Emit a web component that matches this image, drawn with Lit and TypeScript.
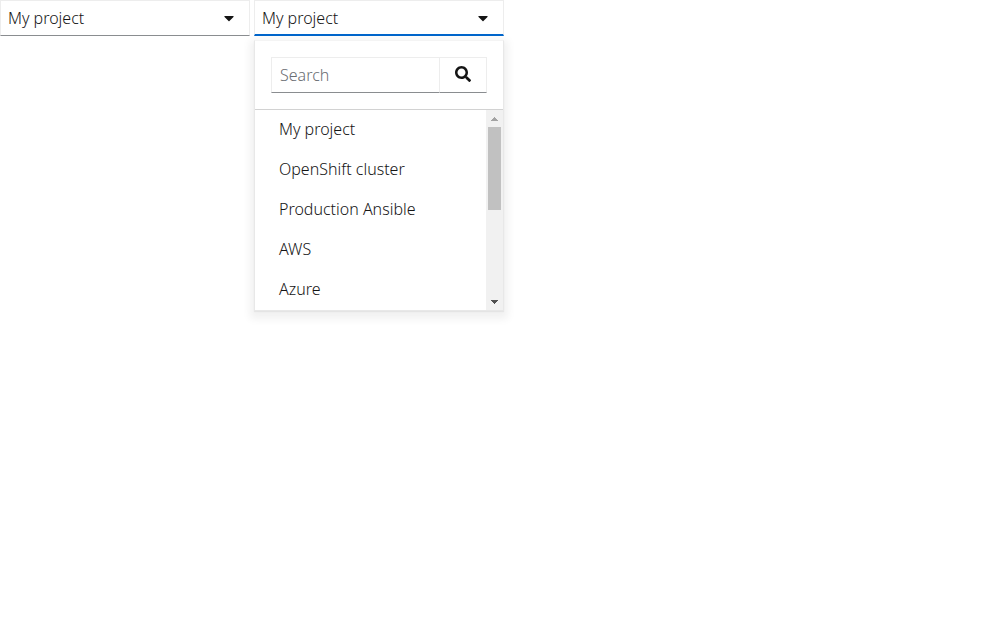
import { LitElement, html, css, nothing } from "lit";
import { customElement, property, state } from "lit/decorators.js";
import { classMap } from "lit/directives/class-map.js";

const PROJECTS = [
  "My project",
  "OpenShift cluster",
  "Production Ansible",
  "AWS",
  "Azure",
  "My project 2",
  "OpenShift cluster 2",
  "Production Ansible 2",
  "AWS 2",
  "Azure 2",
];

const VISIBLE_ROWS = 5;

const searchIcon = html`
  <svg class="icon" viewBox="0 0 512 512" width="16" height="16" aria-hidden="true">
    <path
      fill="currentColor"
      d="M505 442.7L405.3 343c-4.5-4.5-10.6-7-17-7H372c27.6-35.3 44-79.7 44-128C416 93.1 322.9 0 208 0S0 93.1 0 208s93.1 208 208 208c48.3 0 92.7-16.4 128-44v16.3c0 6.4 2.5 12.5 7 17l99.7 99.7c9.4 9.4 24.6 9.4 33.9 0l28.3-28.3c9.4-9.4 9.4-24.6.1-34zM208 336c-70.7 0-128-57.2-128-128 0-70.7 57.2-128 128-128 70.7 0 128 57.2 128 128 0 70.7-57.2 128-128 128z"
    />
  </svg>
`;

const caretIcon = html`
  <svg class="icon" viewBox="0 0 320 512" width="10" height="16" aria-hidden="true">
    <path
      fill="currentColor"
      d="M31.3 192h257.3c17.8 0 26.7 21.5 14.1 34.1L174.1 354.7c-7.8 7.8-20.5 7.8-28.3 0L17.2 226.1C4.6 213.5 13.4 192 31.3 192z"
    />
  </svg>
`;

const base = css`
  *,
  *::before,
  *::after {
    box-sizing: border-box;
  }
  button,
  input {
    margin: 0;
    border: 0;
    border-radius: 0;
    background: transparent;
    color: inherit;
    font: inherit;
  }
  button {
    cursor: pointer;
  }
  .icon {
    display: block;
    flex: none;
  }
`;

/** Windowed list: renders only the rows in view and draws its own scrollbar. */
@customElement("scroll-list")
export class ScrollList extends LitElement {
  @property({ attribute: false }) items: string[] = [];
  @state() private first = 0;

  static styles = [
    base,
    css`
      :host {
        display: flex;
        min-height: 200px;
      }
      .list {
        flex: 1;
        min-width: 0;
        margin: 0;
        padding: 0;
        list-style: none;
      }
      .item {
        display: block;
        width: 100%;
        padding: 7px 24px 9px;
        line-height: 24px;
        text-align: left;
      }
      .item:hover,
      .item:focus-visible {
        background: #f0f0f0;
        outline: 0;
      }
      .bar {
        flex: none;
        display: flex;
        flex-direction: column;
        width: 17px;
        background: #f1f1f1;
      }
      .arrow {
        display: flex;
        align-items: center;
        justify-content: center;
        height: 17px;
        padding: 0;
        color: #505050;
        cursor: default;
      }
      .arrow:disabled {
        color: #a3a3a3;
      }
      .track {
        flex: 1;
        display: flex;
        justify-content: center;
      }
    `,
  ];

  private moveBy(step: number) {
    const last = Math.max(0, this.items.length - VISIBLE_ROWS);
    this.first = Math.min(last, Math.max(0, this.first + step));
  }

  private onWheel(e: WheelEvent) {
    e.preventDefault();
    this.moveBy(Math.sign(e.deltaY));
  }

  willUpdate(changed: Map<string, unknown>) {
    if (changed.has("items")) this.moveBy(0);
  }

  render() {
    const total = Math.max(this.items.length, VISIBLE_ROWS);
    const size = (VISIBLE_ROWS / total) * 100;
    const start = (this.first / total) * 100;
    return html`
      <ul class="list" @wheel=${this.onWheel}>
        ${this.items
          .slice(this.first, this.first + VISIBLE_ROWS)
          .map((name) => html`<li><button class="item" type="button">${name}</button></li>`)}
      </ul>
      <div class="bar">
        <button
          class="arrow"
          type="button"
          aria-label="Scroll up"
          ?disabled=${this.first === 0}
          @click=${() => this.moveBy(-1)}
        >
          <svg class="icon" width="7" height="4" viewBox="0 0 7 4" shape-rendering="crispEdges">
            <path fill="currentColor" d="M3 0h1v1h1v1h1v1h1v1H0V3h1V2h1V1h1z" />
          </svg>
        </button>
        <div class="track">
          <svg class="icon" width="13" height="100%" aria-hidden="true">
            <rect fill="#c1c1c1" width="13" y="${start}%" height="${size}%" />
          </svg>
        </div>
        <button
          class="arrow"
          type="button"
          aria-label="Scroll down"
          ?disabled=${this.first + VISIBLE_ROWS >= total}
          @click=${() => this.moveBy(1)}
        >
          <svg class="icon" width="7" height="4" viewBox="0 0 7 4" shape-rendering="crispEdges">
            <path fill="currentColor" d="M0 0h7v1H6v1H5v1H4v1H3V3H2V2H1V1H0z" />
          </svg>
        </button>
      </div>
    `;
  }
}

@customElement("context-selector")
export class ContextSelector extends LitElement {
  @property() label = "";
  @property({ type: Boolean, reflect: true }) open = false;
  @state() private term = "";

  static styles = [
    base,
    css`
      :host {
        position: relative;
        display: block;
        width: 250px;
        max-width: 100%;
      }
      .toggle {
        display: flex;
        align-items: center;
        justify-content: space-between;
        width: 100%;
        padding: 5px 15px 5px 7px;
        border: 1px solid #ededed;
        border-bottom-color: #8a8d90;
        line-height: 24px;
        text-align: left;
      }
      .toggle.expanded {
        padding-bottom: 4px;
        border-bottom: 2px solid #06c;
      }
      .menu {
        position: absolute;
        top: calc(100% + 4px);
        left: 0;
        z-index: 10;
        width: 100%;
        border: 1px solid #e8e8e8;
        border-top-color: #f4f4f4;
        background: #fff;
        box-shadow:
          0 1px 1px 0 rgba(3, 3, 3, 0.05),
          0 4px 8px 4px rgba(3, 3, 3, 0.06);
      }
      .search {
        display: flex;
        padding: 16px;
        border-bottom: 1px solid #d2d2d2;
      }
      .field {
        flex: 1;
        min-width: 0;
        height: 36px;
        padding: 0 8px;
        border: 1px solid #ededed;
        border-right: 0;
        border-bottom-color: #8a8d90;
        line-height: 24px;
        outline: 0;
      }
      .field::placeholder {
        color: #6a6e73;
        opacity: 1;
      }
      .go {
        display: flex;
        justify-content: center;
        width: 48px;
        height: 36px;
        padding: 8px 15px;
        border: 1px solid #ededed;
        border-bottom-color: #8a8d90;
      }
    `,
  ];

  render() {
    const term = this.term.toLowerCase();
    return html`
      <button
        class=${classMap({ toggle: true, expanded: this.open })}
        type="button"
        aria-expanded=${this.open ? "true" : "false"}
        @click=${() => (this.open = !this.open)}
      >
        <span>${this.label}</span>
        ${caretIcon}
      </button>
      ${this.open
        ? html`
            <div class="menu">
              <div class="search">
                <input
                  class="field"
                  type="text"
                  placeholder="Search"
                  aria-label="Search"
                  .value=${this.term}
                  @input=${(e: Event) => (this.term = (e.target as HTMLInputElement).value)}
                />
                <button class="go" type="button" aria-label="Search">${searchIcon}</button>
              </div>
              <scroll-list .items=${PROJECTS.filter((p) => p.toLowerCase().includes(term))}></scroll-list>
            </div>
          `
        : nothing}
    `;
  }
}

@customElement("app-root")
export class AppRoot extends LitElement {
  static styles = css`
    :host {
      display: flex;
      flex-wrap: wrap;
      align-items: flex-start;
      align-content: flex-start;
      gap: 4px;
      min-height: 100vh;
      background: #fff;
      color: #151515;
      font: 300 16px/24px "Noto Sans", "Open Sans", sans-serif;
    }
  `;

  render() {
    return html`
      <context-selector label="My project"></context-selector>
      <context-selector label="My project" open></context-selector>
    `;
  }
}
